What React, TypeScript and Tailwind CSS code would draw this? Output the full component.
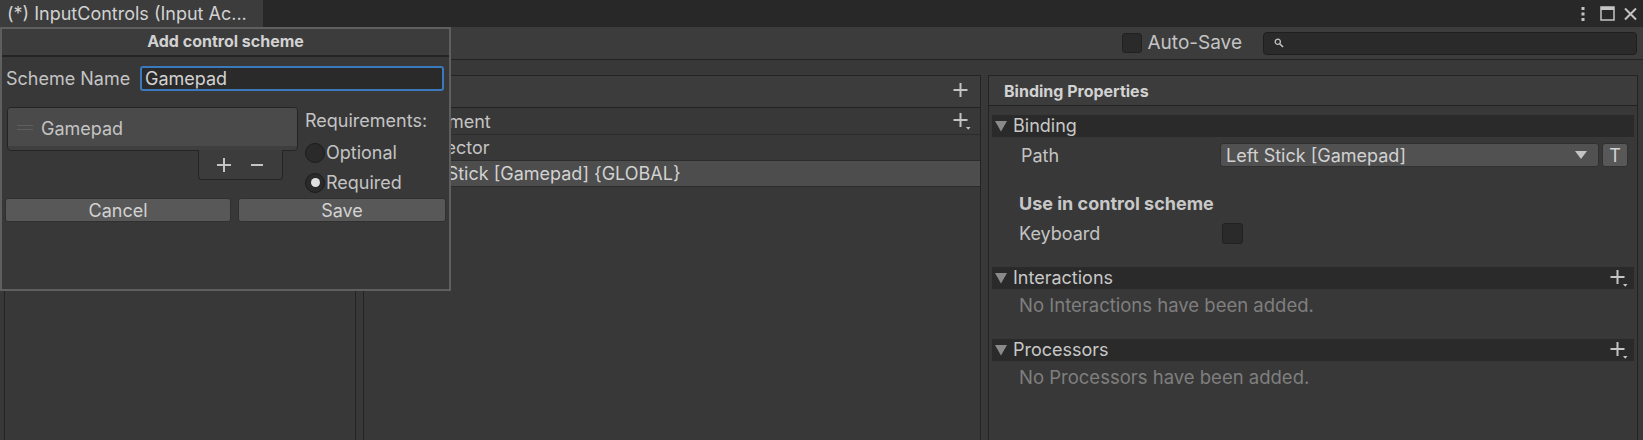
import React from "react";

function PlusIcon({ drop = false }: { drop?: boolean }) {
  return (
    <svg width="19" height="19" viewBox="0 0 19 19">
      <rect x="1.5" y="7" width="14" height="2" fill="#c4c4c4" />
      <rect x="7.5" y="1" width="2" height="14" fill="#c4c4c4" />
      {drop && <path d="M14 15 L18.5 15 L16.25 17.8 Z" fill="#c4c4c4" />}
    </svg>
  );
}

function Foldout({ label, add = false }: { label: string; add?: boolean }) {
  return (
    <div className="h-[22px] bg-[#2a2a2a] flex items-center justify-between pl-[3px] pr-[6px]">
      <div className="flex items-center gap-[6px]">
        <svg width="12" height="12" viewBox="0 0 12 12">
          <path d="M0 1 L12 1 L6 11.5 Z" fill="#8a8a8a" />
        </svg>
        <span className="text-[18px] text-[#c8c8c8] leading-none">{label}</span>
      </div>
      {add && <PlusIcon drop />}
    </div>
  );
}

export default function App() {
  return (
    <div className="relative w-[1643px] h-[440px] overflow-hidden bg-[#383838] text-[#c4c4c4] font-['Inter','Noto_Sans',sans-serif] flex flex-col">
      {/* tab strip */}
      <div className="h-[27px] bg-[#282828] flex justify-between shrink-0">
        <div className="w-[263px] bg-[#3c3c3c] flex items-center pl-[7px] text-[18px] text-[#d2d2d2] whitespace-nowrap">
          (*) InputControls (Input Ac...
        </div>
        <div className="flex items-center pr-[6px]">
          <svg width="6" height="16" viewBox="0 0 6 16" className="mr-[14px]">
            <rect x="1.5" y="1" width="3" height="3" fill="#c4c4c4" />
            <rect x="1.5" y="6.5" width="3" height="3" fill="#c4c4c4" />
            <rect x="1.5" y="12" width="3" height="3" fill="#c4c4c4" />
          </svg>
          <svg width="15" height="15" viewBox="0 0 15 15" className="mr-[9px]">
            <rect x="1" y="1" width="13" height="13" fill="none" stroke="#c4c4c4" strokeWidth="1.5" />
            <rect x="1" y="1" width="13" height="3" fill="#c4c4c4" />
          </svg>
          <svg width="13" height="14" viewBox="0 0 13 14">
            <path d="M1 1.5 L12 12.5 M12 1.5 L1 12.5" stroke="#c4c4c4" strokeWidth="2" />
          </svg>
        </div>
      </div>

      {/* toolbar */}
      <div className="h-[33px] bg-[#3c3c3c] border-b border-[#232323] flex items-center justify-end pr-[6px] shrink-0">
        <div className="w-[20px] h-[20px] rounded-[3px] bg-[#2a2a2a] border border-[#212121]" />
        <span className="ml-[6px] text-[19px] text-[#c4c4c4]">Auto-Save</span>
        <div className="ml-[21px] w-[374px] h-[23px] rounded-[4px] bg-[#2a2a2a] border border-[#1e1e1e] flex items-center pl-[10px]">
          <svg width="10" height="10" viewBox="0 0 10 10">
            <circle cx="3.8" cy="3.8" r="2.6" fill="none" stroke="#c4c4c4" strokeWidth="1.3" />
            <path d="M5.7 5.7 L9 9" stroke="#c4c4c4" strokeWidth="1.6" />
          </svg>
        </div>
      </div>

      {/* panes */}
      <div className="flex-1 flex pt-[15px] pl-[4px] pr-[5px] gap-[7px] min-h-0">
        {/* action maps */}
        <div className="w-[352px] border border-[#232323] border-b-0 flex flex-col">
          <div className="h-[32px] bg-[#3c3c3c] border-b border-[#232323] flex items-center justify-between pl-[10px] pr-[12px]">
            <span className="text-[16px] font-bold text-[#c4c4c4]">Action Maps</span>
            <PlusIcon />
          </div>
        </div>

        {/* actions */}
        <div className="w-[618px] border border-[#232323] border-b-0 flex flex-col">
          <div className="h-[32px] bg-[#3c3c3c] border-b border-[#232323] flex items-center justify-end pr-[9px]">
            <PlusIcon />
          </div>
          <div className="h-[27px] border-b border-[#2c2c2c] flex items-center justify-between pl-[37px] pr-[9px]">
            <span className="text-[18px]">Movement</span>
            <PlusIcon drop />
          </div>
          <div className="h-[26px] border-b border-[#2c2c2c] flex items-center pl-[41px]">
            <span className="text-[18px]">2D Vector</span>
          </div>
          <div className="h-[26px] bg-[#4d4d4d] border-b border-[#2c2c2c] flex items-center pl-[45px]">
            <span className="text-[18px] text-[#d2d2d2]">Left Stick [Gamepad] {"{GLOBAL}"}</span>
          </div>
        </div>

        {/* binding properties */}
        <div className="flex-1 border border-[#232323] border-b-0 flex flex-col">
          <div className="h-[30px] bg-[#3c3c3c] border-b border-[#232323] flex items-center pl-[15px]">
            <span className="text-[16px] font-bold text-[#d2d2d2]">Binding Properties</span>
          </div>
          <div className="flex flex-col pt-[9px] pl-[3px] pr-[3px]">
            <Foldout label="Binding" />
            <div className="h-[24px] mt-[6px] flex items-center">
              <span className="w-[228px] pl-[29px] text-[18px]">Path</span>
              <div className="flex-1 h-[24px] rounded-[3px] bg-[#515151] border border-[#303030] flex items-center justify-between pl-[5px] pr-[11px]">
                <span className="text-[18px] text-[#d2d2d2]">Left Stick [Gamepad]</span>
                <svg width="12" height="9" viewBox="0 0 12 9">
                  <path d="M0 0 L12 0 L6 8 Z" fill="#c4c4c4" />
                </svg>
              </div>
              <div className="ml-[3px] mr-[6px] w-[26px] h-[24px] rounded-[3px] bg-[#585858] border border-[#303030] flex items-center justify-center text-[18px] text-[#d2d2d2]">
                T
              </div>
            </div>
            <div className="mt-[23px] pl-[27px] text-[18px] font-bold text-[#c8c8c8]">Use in control scheme</div>
            <div className="mt-[5px] h-[22px] flex items-center">
              <span className="w-[230px] pl-[27px] text-[18px]">Keyboard</span>
              <div className="w-[21px] h-[21px] rounded-[3px] bg-[#2a2a2a] border border-[#212121]" />
            </div>
            <div className="mt-[23px]">
              <Foldout label="Interactions" add />
            </div>
            <div className="h-[30px] pt-[4px] flex items-center pl-[27px] text-[18.5px] text-[#7f7f7f]">No Interactions have been added.</div>
            <div className="mt-[20px]">
              <Foldout label="Processors" add />
            </div>
            <div className="h-[30px] pt-[4px] flex items-center pl-[27px] text-[18.5px] text-[#7f7f7f]">No Processors have been added.</div>
          </div>
        </div>
      </div>

      {/* add control scheme popup */}
      <div className="absolute left-0 top-[27px] w-[451px] h-[264px] border-2 border-[#5f5f5f] bg-[#383838] flex flex-col">
        <div className="h-[28px] pb-[3px] bg-[#3c3c3c] border-b-2 border-[#242424] flex items-center justify-center">
          <span className="text-[16px] font-bold text-[#d2d2d2]">Add control scheme</span>
        </div>
        <div className="flex items-center pt-[8px] pl-[4px] pr-[5px]">
          <span className="w-[134px] text-[18px] text-[#c4c4c4]">Scheme Name</span>
          <div className="flex-1 h-[25px] rounded-[3px] bg-[#2a2a2a] border-2 border-[#3a79bb] flex items-center pl-[3px] text-[18px] text-[#d2d2d2]">
            Gamepad
          </div>
        </div>
        <div className="flex pt-[15px] pl-[5px] pr-[5px]">
          <div className="w-[291px] flex flex-col items-end">
            <div className="w-full h-[44px] rounded-[4px] border border-[#242424] bg-[#3f3f3f] overflow-hidden">
              <div className="h-[38px] pt-[2px] bg-[#4a4a4a] flex items-center pl-[9px]">
                <svg width="16" height="6" viewBox="0 0 16 6">
                  <rect x="0" y="0" width="16" height="1" fill="#5e5e5e" />
                  <rect x="0" y="4" width="16" height="1" fill="#5e5e5e" />
                </svg>
                <span className="ml-[8px] text-[18px] text-[#c4c4c4]">Gamepad</span>
              </div>
            </div>
            <div className="mr-[15px] w-[85px] h-[30px] -mt-[1px] rounded-b-[4px] border border-t-0 border-[#242424] bg-[#3c3c3c] flex items-center justify-around px-[8px]">
              <svg width="14" height="14" viewBox="0 0 14 14">
                <rect x="0" y="6" width="14" height="2" fill="#c4c4c4" />
                <rect x="6" y="0" width="2" height="14" fill="#c4c4c4" />
              </svg>
              <svg width="14" height="14" viewBox="0 0 14 14">
                <rect x="1" y="6" width="12" height="2" fill="#c4c4c4" />
              </svg>
            </div>
          </div>
          <div className="ml-[7px] mt-[2px] flex flex-col">
            <span className="text-[18px] leading-[24px] text-[#c4c4c4]">Requirements:</span>
            <div className="mt-[6px] flex items-center">
              <div className="w-[20px] h-[20px] rounded-full bg-[#2a2a2a] border border-[#1c1c1c]" />
              <span className="ml-[1px] text-[18px] text-[#c4c4c4]">Optional</span>
            </div>
            <div className="mt-[3px] flex items-center">
              <div className="w-[20px] h-[20px] rounded-full bg-[#2a2a2a] border border-[#1c1c1c] flex items-center justify-center">
                <div className="w-[9px] h-[9px] rounded-full bg-[#e0e0e0]" />
              </div>
              <span className="ml-[1px] text-[18px] text-[#c4c4c4]">Required</span>
            </div>
          </div>
        </div>
        <div className="flex gap-[7px] pt-[2px] pl-[3px] pr-[3px]">
          <div className="w-[226px] h-[24px] rounded-[3px] bg-[#585858] border border-[#303030] flex items-center justify-center text-[18px] text-[#d2d2d2]">
            Cancel
          </div>
          <div className="flex-1 h-[24px] rounded-[3px] bg-[#585858] border border-[#303030] flex items-center justify-center text-[18px] text-[#d2d2d2]">
            Save
          </div>
        </div>
      </div>
    </div>
  );
}
